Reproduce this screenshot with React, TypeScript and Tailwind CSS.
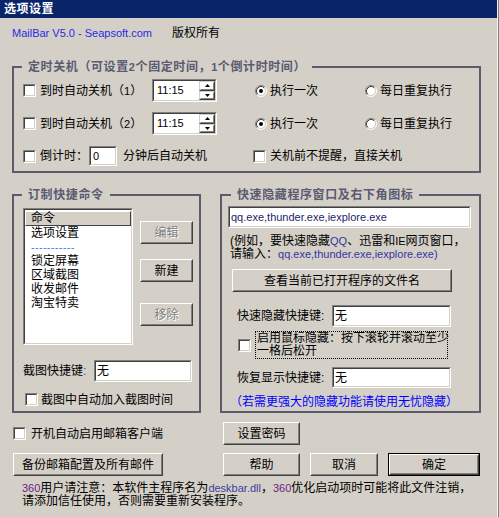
import React from 'react';

const Check = ({ className = '' }: { className?: string }) => (
  <div className={`w-[13px] h-[13px] shrink-0 border border-t-[#808080] border-l-[#808080] border-b-white border-r-white ${className}`}>
    <div className="w-full h-full bg-white border border-t-[#404040] border-l-[#404040] border-b-[#d4d0c8] border-r-[#d4d0c8]" />
  </div>
);

const Field = ({ className = '', inner = '', children }: { className?: string; inner?: string; children?: React.ReactNode }) => (
  <div className={`shrink-0 border border-t-[#808080] border-l-[#808080] border-b-white border-r-white ${className}`}>
    <div className={`w-full h-full bg-white border border-t-[#404040] border-l-[#404040] border-b-[#d4d0c8] border-r-[#d4d0c8] ${inner || 'flex items-center'}`}>
      {children}
    </div>
  </div>
);

const Btn = ({ className = '', children, disabled = false, def = false }: { className?: string; children?: React.ReactNode; disabled?: boolean; def?: boolean }) => {
  const body = (
    <div className="w-full h-full border border-t-white border-l-white border-b-[#404040] border-r-[#404040]">
      <div className="w-full h-full border border-t-[#d4d0c8] border-l-[#d4d0c8] border-b-[#808080] border-r-[#808080] flex items-center justify-center whitespace-nowrap">
        <span className={disabled ? 'text-[#808080] [text-shadow:1px_1px_0_#ffffff]' : ''}>{children}</span>
      </div>
    </div>
  );
  return def ? (
    <div className={`shrink-0 border border-black ${className}`}>{body}</div>
  ) : (
    <div className={`shrink-0 ${className}`}>{body}</div>
  );
};

const Radio = ({ checked = false }: { checked?: boolean }) => (
  <svg width="12" height="12" viewBox="0 0 12 12" className="shrink-0">
    <circle cx="6" cy="6" r="4.5" fill="#fff" />
    <path d="M2.11 9.89 A5.5 5.5 0 0 1 9.89 2.11" stroke="#808080" fill="none" />
    <path d="M9.89 2.11 A5.5 5.5 0 0 1 2.11 9.89" stroke="#ffffff" fill="none" />
    <path d="M2.82 9.18 A4.5 4.5 0 0 1 9.18 2.82" stroke="#404040" fill="none" />
    <path d="M9.18 2.82 A4.5 4.5 0 0 1 2.82 9.18" stroke="#d4d0c8" fill="none" />
    {checked && <circle cx="6" cy="6" r="2" fill="#000" />}
  </svg>
);

const SpinBtn = ({ up }: { up: boolean }) => (
  <div className="flex-1 border border-t-[#d4d0c8] border-l-[#d4d0c8] border-b-[#404040] border-r-[#404040]">
    <div className="w-full h-full border border-t-white border-l-white border-b-[#808080] border-r-[#808080] flex items-center justify-center">
      <svg width="5" height="3" viewBox="0 0 5 3">
        {up ? <path d="M2.5 0 L5 3 L0 3 Z" fill="#000" /> : <path d="M0 0 L5 0 L2.5 3 Z" fill="#000" />}
      </svg>
    </div>
  </div>
);

const TimeInput = () => (
  <Field className="w-[65px] h-[23px]" inner="flex items-stretch">
    <span className="flex-1 pl-[3px] text-[11px] leading-[19px]">11:15</span>
    <div className="w-[16px] flex flex-col">
      <SpinBtn up />
      <SpinBtn up={false} />
    </div>
  </Field>
);

const Legend = ({ children, className = '' }: { children: React.ReactNode; className?: string }) => (
  <legend className={`px-[6px] text-[12px] font-bold leading-[16px] tracking-[0.6px] text-[#5a5a72] whitespace-nowrap ${className}`}>{children}</legend>
);

const ShutRow = ({ n, cls }: { n: string; cls?: string }) => (
  <div className={`flex items-center h-[23px] pl-[9px] ${cls || ''}`}>
    <Check />
    <span className="ml-[4px] w-[112px] whitespace-nowrap">
      到时自动关机（<span className="text-[11px]">{n}</span>）
    </span>
    <TimeInput />
    <div className="ml-[38px] w-[110px] flex items-center">
      <Radio checked />
      <span className="ml-[3px]">执行一次</span>
    </div>
    <div className="flex items-center">
      <Radio />
      <span className="ml-[3px]">每日重复执行</span>
    </div>
  </div>
);

export default function App() {
  return (
    <div className="w-[499px] h-[517px] bg-[#D4D0C8] border-r border-r-[#808080] overflow-hidden text-[12px] text-black font-['Liberation_Sans','Noto_Sans_CJK_SC',sans-serif]">
      <div className="h-full border-r border-r-[#f4f4f4] flex flex-col">
        <div className="h-[18px] shrink-0 bg-[#0A246A] text-white font-bold text-[12px] tracking-[0.5px] leading-[19px] pl-[4px]">选项设置</div>

        <div className="mt-[7px] h-[16px] flex items-center pl-[12px] leading-[16px]">
          <span className="w-[160px] text-[11px] text-[#2a2ae6]">MailBar V5.0 - Seapsoft.com</span>
          <span>版权所有</span>
        </div>

        <fieldset className="mt-[18px] ml-[12px] w-[469px] h-[114px] shrink-0 border-2 border-[#5c5c70]">
          <Legend className="ml-[8px]">定时关机（可设置<span className="text-[11px]">2</span>个固定时间，<span className="text-[11px]">1</span>个倒计时时间）</Legend>
          <ShutRow n="1" cls="mt-[4px]" />
          <ShutRow n="2" cls="mt-[10px]" />
          <div className="flex items-center h-[20px] pl-[9px] mt-[11px]">
            <Check />
            <span className="ml-[4px] w-[49px] whitespace-nowrap">倒计时：</span>
            <Field className="w-[28px] h-[20px]">
              <span className="pl-[2px] text-[11px]">0</span>
            </Field>
            <span className="ml-[6px] w-[130px] whitespace-nowrap">分钟后自动关机</span>
            <Check />
            <span className="ml-[4px] whitespace-nowrap">关机前不提醒，直接关机</span>
          </div>
        </fieldset>

        <div className="flex mt-[14px] shrink-0">
          <fieldset className="ml-[12px] w-[189px] h-[226px] shrink-0 border-2 border-[#5c5c70]">
            <Legend className="ml-[8px]">订制快捷命令</Legend>
            <div className="flex mt-[5px] pl-[9px]">
              <Field className="w-[110px] h-[137px]" inner="flex flex-col">
                <div className="mt-[1px] h-[15px] bg-[#d4d0c8] border border-t-white border-l-white border-b-[#404040] border-r-[#404040] pl-[5px] leading-[13px]">命令</div>
                <div className="pl-[6px] leading-[14px] whitespace-nowrap">
                  <div>选项设置</div>
                  <div className="text-[11px] text-[#2f7fff] tracking-[0.3px]">-----------</div>
                  <div>锁定屏幕</div>
                  <div>区域截图</div>
                  <div>收发邮件</div>
                  <div>淘宝特卖</div>
                </div>
              </Field>
              <div className="ml-[7px] flex flex-col">
                <Btn className="mt-[13px] w-[53px] h-[23px]" disabled>编辑</Btn>
                <Btn className="mt-[15px] w-[53px] h-[23px]">新建</Btn>
                <Btn className="mt-[21px] w-[53px] h-[23px]" disabled>移除</Btn>
              </div>
            </div>
            <div className="flex items-center mt-[15px] pl-[9px] h-[22px]">
              <span className="w-[71px] whitespace-nowrap">截图快捷键<span className="text-[#6a3a8a]">:</span></span>
              <Field className="w-[98px] h-[22px]">
                <span className="pl-[1px]">无</span>
              </Field>
            </div>
            <div className="flex items-center mt-[11px] pl-[11px] h-[13px]">
              <Check />
              <span className="ml-[3px] whitespace-nowrap">截图中自动加入截图时间</span>
            </div>
          </fieldset>

          <fieldset className="ml-[19px] w-[261px] h-[226px] shrink-0 border-2 border-[#5c5c70]">
            <Legend className="ml-[9px]">快速隐藏程序窗口及右下角图标</Legend>
            <Field className="mt-[3px] ml-[6px] w-[243px] h-[22px]">
              <span className="pl-[1px] text-[11px] text-[#24246a]">qq.exe,thunder.exe,iexplore.exe</span>
            </Field>
            <div className="mt-[7px] ml-[8px] leading-[13px] whitespace-nowrap">
              (例如，要快速隐藏<span className="text-[11px] text-[#3535a0]">QQ</span>、迅雷和<span className="text-[11px]">IE</span>网页窗口，
              <br />
              请输入：<span className="text-[11px] text-[#3535a0]">qq.exe,thunder.exe,iexplore.exe)</span>
            </div>
            <Btn className="mt-[8px] ml-[10px] w-[220px] h-[23px]">查看当前已打开程序的文件名</Btn>
            <div className="flex items-center mt-[13px] ml-[15px] h-[22px]">
              <span className="w-[95px] whitespace-nowrap">快速隐藏快捷键:</span>
              <Field className="w-[119px] h-[22px]">
                <span className="pl-[1px]">无</span>
              </Field>
            </div>
            <div className="flex items-center mt-[4px] ml-[16px]">
              <Check />
              <div className="ml-[4px] w-[193px] h-[28px] border border-dotted border-black pl-[1px] leading-[13px] whitespace-nowrap">
                启用鼠标隐藏：按下滚轮并滚动至少
                <br />
                一格后松开
              </div>
            </div>
            <div className="flex items-center mt-[8px] ml-[15px] h-[21px]">
              <span className="w-[95px] whitespace-nowrap">恢复显示快捷键:</span>
              <Field className="w-[119px] h-[21px]">
                <span className="pl-[1px]">无</span>
              </Field>
            </div>
            <div className="mt-[8px] ml-[8px] leading-[12px] text-[#0000ff] whitespace-nowrap">（若需更强大的隐藏功能请使用无忧隐藏）</div>
          </fieldset>
        </div>

        <div className="flex items-center mt-[9px] h-[23px] shrink-0">
          <div className="w-[223px] pl-[13px] flex items-center">
            <Check />
            <span className="ml-[5px] whitespace-nowrap">开机自动启用邮箱客户端</span>
          </div>
          <Btn className="w-[77px] h-[23px]">设置密码</Btn>
        </div>

        <div className="flex items-center mt-[8px] h-[23px] shrink-0">
          <Btn className="ml-[13px] w-[150px] h-[23px]">备份邮箱配置及所有邮件</Btn>
          <Btn className="ml-[60px] w-[77px] h-[23px]">帮助</Btn>
          <Btn className="ml-[10px] w-[68px] h-[23px]">取消</Btn>
          <Btn className="ml-[10px] w-[92px] h-[23px]" def>确定</Btn>
        </div>

        <div className="mt-[6px] pl-[22px] leading-[13px] whitespace-nowrap">
          <span className="text-[11px] text-[#6b2080]">360</span>用户请注意：本软件主程序名为<span className="text-[11px] text-[#3c3ca0]">deskbar.dll</span>，<span className="text-[11px] text-[#6b2080]">360</span>优化启动项时可能将此文件注销，
          <br />
          请添加信任使用，否则需要重新安装程序。
        </div>
      </div>
    </div>
  );
}
